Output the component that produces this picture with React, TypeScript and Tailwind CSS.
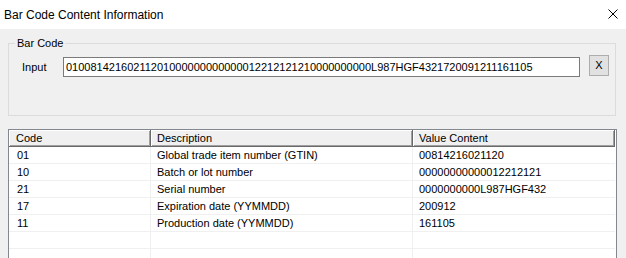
import React from "react";

const rows: [string, string, string][] = [
  ["01", "Global trade item number (GTIN)", "00814216021120"],
  ["10", "Batch or lot number", "00000000000012212121"],
  ["21", "Serial number", "0000000000L987HGF432"],
  ["17", "Expiration date (YYMMDD)", "200912"],
  ["11", "Production date (YYMMDD)", "161105"],
  ["", "", ""],
  ["", "", ""],
];

const hdr =
  "h-[17px] flex items-center bg-[#f0f0f0] border-r border-b border-[#696969] shadow-[inset_1px_1px_0_#ffffff,inset_-1px_-1px_0_#a0a0a0]";

export default function App() {
  return (
    <div
      className="w-[626px] h-[258px] overflow-hidden bg-[#f0f0f0] text-black flex flex-col"
      style={{ fontFamily: '"Liberation Sans", Arial, sans-serif' }}
    >
      <div className="h-[29px] shrink-0 bg-white flex items-center justify-between pl-[4px] pr-[8px]">
        <span className="text-[12px] leading-none">Bar Code Content Information</span>
        <svg width="10" height="10" viewBox="0 0 10 10" className="mt-[-1px]">
          <path d="M0.5 0.5 L9.5 9.5 M9.5 0.5 L0.5 9.5" stroke="#000" strokeWidth="1" />
        </svg>
      </div>

      <div className="relative mt-[14px] ml-[8px] w-[608px] h-[73px] shrink-0 border border-[#dcdcdc]">
        <span className="absolute left-[6px] top-[-8px] bg-[#f0f0f0] px-[2px] text-[11px] leading-[14px]">
          Bar Code
        </span>
        <div className="flex items-start pt-[11px] pl-[13px]">
          <span className="w-[41px] text-[11px] leading-[13px] mt-[6px]">Input</span>
          <div className="mt-[2px] w-[517px] h-[20px] border border-[#7a7a7a] bg-white flex items-center pl-[2px] text-[11px] leading-none whitespace-nowrap overflow-hidden">
            01008142160211201000000000000012212121210000000000L987HGF4321720091211161105
          </div>
          <div className="ml-[9px] w-[20px] h-[21px] border border-[#adadad] bg-[#e1e1e1] flex items-center justify-center text-[11px] leading-none">
            X
          </div>
        </div>
      </div>

      <div className="mt-[13px] ml-[8px] w-[609px] flex-1 border border-[#828790] bg-white text-[11px] leading-none">
        <div className="flex">
          <div className={`${hdr} w-[142px] pl-[7px]`}>Code</div>
          <div className={`${hdr} w-[262px] pl-[6px]`}>Description</div>
          <div className={`${hdr} w-[202px] pl-[6px]`}>Value Content</div>
        </div>
        {rows.map((r, i) => (
          <div key={i} className="flex h-[17px]">
            <div className="w-[142px] border-b border-r border-[#f0f0f0] flex items-center pl-[8px]">{r[0]}</div>
            <div className="w-[262px] border-b border-r border-[#f0f0f0] flex items-center pl-[6px]">{r[1]}</div>
            <div className="w-[202px] border-b border-[#f0f0f0] flex items-center pl-[6px]">{r[2]}</div>
          </div>
        ))}
      </div>
    </div>
  );
}
